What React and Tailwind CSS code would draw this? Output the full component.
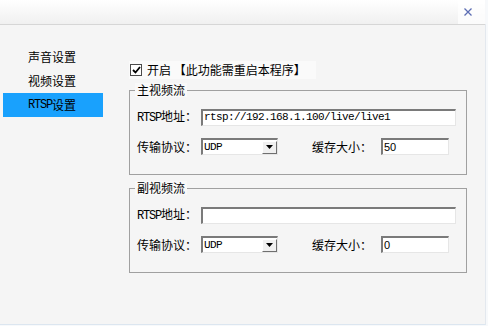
const cjk = { fontFamily: '"Noto Sans CJK SC", "Noto Sans", sans-serif' };

const sunken =
  'bg-white border-t-2 border-l-2 border-t-[#7a7a7a] border-l-[#7a7a7a] border-r border-b border-r-[#e6e6e6] border-b-[#e6e6e6]';

function Label({ children }) {
  return <span className="w-[64px] shrink-0 text-[12px] leading-[17px] text-black">{children}</span>;
}

function RtspLabel() {
  return (
    <Label>
      <span className="font-['Liberation_Mono'] text-[12px] tracking-[-1.2px]">RTSP</span>地址：
    </Label>
  );
}

function Combo({ value }) {
  return (
    <div className={`${sunken} w-[77px] h-[17px] flex items-center justify-between`}>
      <span className="pl-[1px] font-['Liberation_Mono'] text-[11px] leading-[13px] tracking-[-0.6px] text-black">
        {value}
      </span>
      <div className="w-[15px] h-[13px] bg-[#f0f0f0] border border-t-white border-l-white border-r-[#6f6f6f] border-b-[#6f6f6f] flex items-center justify-center">
        <svg width="7" height="4" viewBox="0 0 7 4">
          <path d="M0 0h7L3.5 4z" fill="#000" />
        </svg>
      </div>
    </div>
  );
}

function StreamGroup({ title, url, cache, className = '' }) {
  return (
    <fieldset className={`w-[338px] h-[92px] border border-[#a0a0a0] p-0 m-0 ${className}`}>
      <legend className="ml-[5px] px-[2px] bg-[#f9f9f9] text-[12px] leading-[14px] text-black">{title}</legend>
      <div className="pl-[7px] pt-[10px] flex flex-col gap-[11px]">
        <div className="flex items-center">
          <RtspLabel />
          <div className={`${sunken} w-[255px] h-[17px] flex items-center`}>
            <span className="pl-[1px] font-['Liberation_Mono'] text-[11px] leading-[13px] tracking-[-0.6px] text-black">
              {url}
            </span>
          </div>
        </div>
        <div className="flex items-center">
          <Label>传输协议：</Label>
          <Combo value="UDP" />
          <span className="ml-[34px] w-[69px] text-[12px] leading-[17px] text-black">缓存大小：</span>
          <div className={`${sunken} w-[68px] h-[17px] flex items-center`}>
            <span className="pl-[1px] font-['Liberation_Sans'] text-[11px] leading-[13px] text-black">{cache}</span>
          </div>
        </div>
      </div>
    </fieldset>
  );
}

export default function App() {
  const menu = ['声音设置', '视频设置', 'RTSP设置'];

  return (
    <div className="w-[488px] h-[326px] bg-[#f7f9fb]" style={cjk}>
      <div className="w-[486px] h-[325px] flex flex-col bg-[#f5f5f5] border-r border-b border-r-[#e3e8ee] border-b-[#dce6f0]">
        <div className="h-[25px] shrink-0 flex justify-end items-start bg-gradient-to-b from-white to-[#f0f0f0] border-b border-[#d6d6d6]">
          <div className="w-[28px] h-[24px] bg-white/70 flex items-start justify-start pt-[8px] pl-[6px] mr-[-1px]">
            <svg width="8" height="8" viewBox="0 0 8 8">
              <path d="M0.5 0.5l7 7M7.5 0.5l-7 7" stroke="#5c6db3" strokeWidth="1.3" />
            </svg>
          </div>
        </div>

        <div className="flex flex-1">
          <div className="w-[129px] shrink-0 pt-[20px] pl-[3px]">
            {menu.map((item, i) => (
              <div
                key={item}
                className={`w-[100px] h-[24px] pl-[25px] flex items-center text-[12px] text-black ${
                  i === 2 ? 'bg-[#19a1fd]' : ''
                }`}
              >
                {item.startsWith('RTSP') ? (
                  <>
                    <span className="font-['Liberation_Mono'] text-[12px] tracking-[-1.2px]">RTSP</span>设置
                  </>
                ) : (
                  item
                )}
              </div>
            ))}
          </div>

          <div className="flex flex-col pt-[36px]">
            <div className="w-[187px] h-[18px] bg-[#fafafa] flex items-center pl-[1px]">
              <div className="w-[12px] h-[12px] bg-white border border-[#4a4a4a] flex items-center justify-center">
                <svg width="9" height="8" viewBox="0 0 9 8">
                  <path d="M1 4l2.5 2.5L8 1" fill="none" stroke="#000" strokeWidth="1.8" />
                </svg>
              </div>
              <span className="ml-[5px] text-[12px] leading-[14px] text-black whitespace-nowrap">
                开启 【此功能需重启本程序】
              </span>
            </div>

            <StreamGroup title="主视频流" url="rtsp://192.168.1.100/live/live1" cache="50" className="mt-[4px]" />
            <StreamGroup title="副视频流" url="" cache="0" className="mt-[6px]" />
          </div>
        </div>
      </div>
    </div>
  );
}
